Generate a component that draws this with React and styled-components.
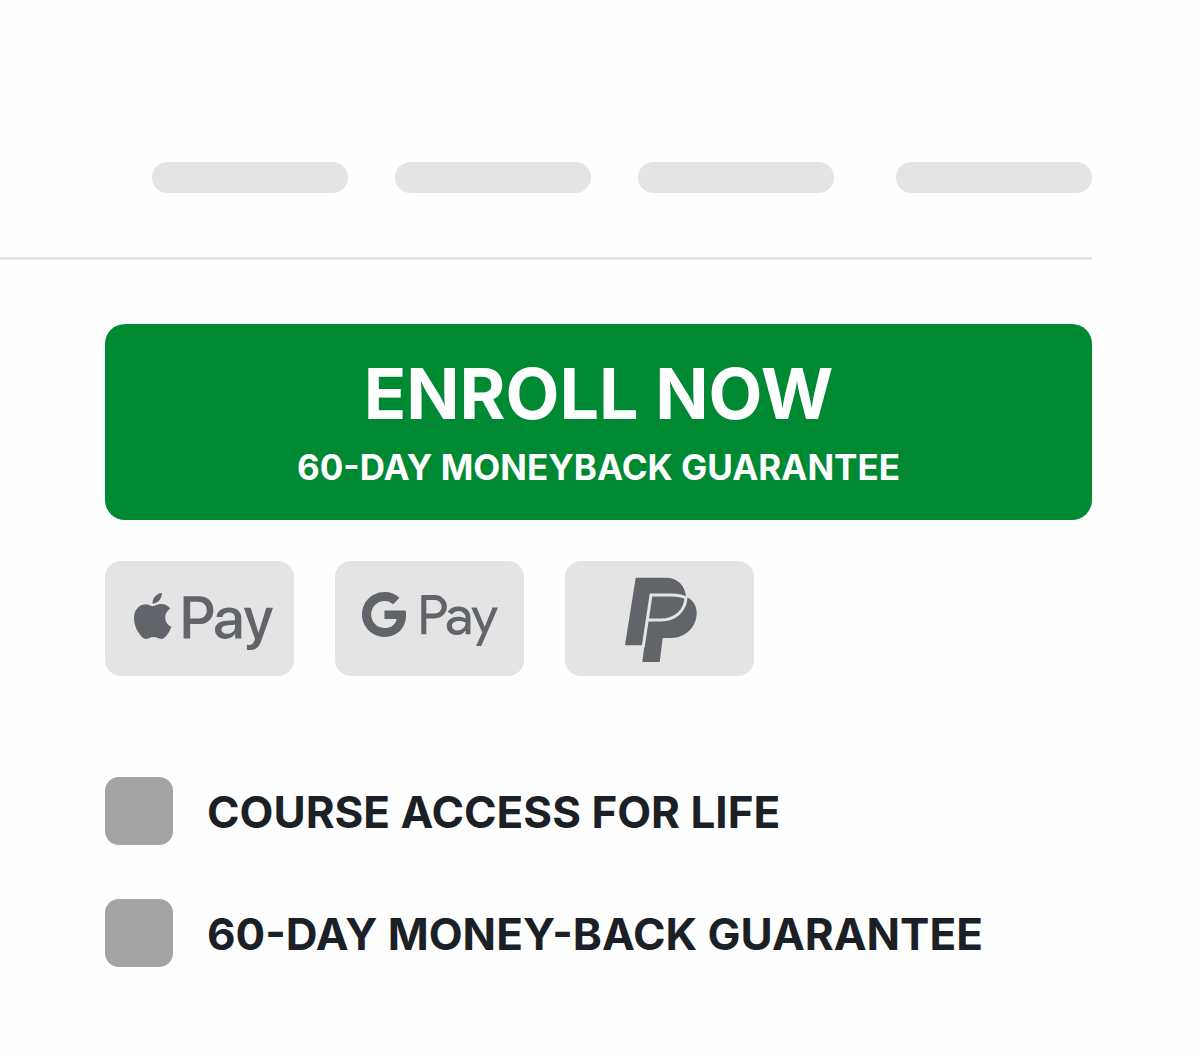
import React from "react";
import styled, { createGlobalStyle } from "styled-components";
import { FaApplePay } from "react-icons/fa";
import { SiGooglepay } from "react-icons/si";

const GlobalStyle = createGlobalStyle`
  *, *::before, *::after { box-sizing: border-box; }
  body {
    margin: 0;
    background: #fefefe;
    color: #1b1f26;
    font-family: Inter, "Liberation Sans", sans-serif;
  }
`;

const Page = styled.div`
  padding: 162px 108px 90px 0;
`;

const Header = styled.header`
  padding: 0 0 64px 152px;
  border-bottom: 3px solid #e4e4e4;
`;

const Nav = styled.nav`
  display: flex;
  justify-content: space-between;
`;

const NavGroup = styled.div`
  display: flex;
  gap: 47px;
`;

const NavPill = styled.span`
  width: 196px;
  height: 31px;
  border-radius: 16px;
  background: #e4e4e4;
`;

const Main = styled.main`
  display: flex;
  flex-direction: column;
  padding: 64px 0 0 105px;
`;

const EnrollButton = styled.button`
  display: flex;
  flex-direction: column;
  align-items: center;
  gap: 11px;
  width: 100%;
  padding: 32px 24px 29px;
  border: 0;
  border-radius: 20px;
  background: #008933;
  color: #fff;
  font-family: inherit;
  font-weight: 700;
  cursor: pointer;
`;

const EnrollTitle = styled.span`
  font-size: 70px;
  line-height: 76px;
`;

const EnrollNote = styled.span`
  font-size: 35px;
  line-height: 48px;
`;

const PaymentList = styled.ul`
  display: flex;
  gap: 41px;
  margin: 41px 0 0;
  padding: 0;
  list-style: none;
`;

const PaymentCard = styled.li`
  display: flex;
  align-items: center;
  justify-content: center;
  width: 189px;
  height: 115px;
  border-radius: 16px;
  background: #e4e4e4;
  color: #616468;
`;

const FeatureList = styled.ul`
  display: flex;
  flex-direction: column;
  gap: 54px;
  margin: 101px 0 0;
  padding: 0;
  list-style: none;
`;

const FeatureLabel = styled.label`
  display: flex;
  align-items: center;
  gap: 34px;
  font-size: 44px;
  line-height: 64px;
  font-weight: 700;
`;

const FeatureText = styled.span`
  padding-top: 2px;
`;

const FeatureBox = styled.input`
  appearance: none;
  flex: none;
  width: 68px;
  height: 68px;
  margin: 0;
  border-radius: 14px;
  background: #a3a3a3;
`;

function PaypalMark() {
  return (
    <svg width="75" height="87" viewBox="-1 -1 75 87" role="img" aria-label="PayPal">
      <path
        fill="currentColor"
        d="M12.7 1.7H43C54 1.7 62 9 63 20.5C70 24 73.7 29.5 73.7 37C73.7 51 62.5 62 48 62H39.7L36.7 86H19.3L21.5 69.3H2Z"
      />
      <path
        fill="none"
        stroke="#e4e4e4"
        strokeWidth="3"
        d="M20.2 71L28 19H48C55 19 59.5 20 63 22C62 35 52 44 38 44H24.5"
      />
    </svg>
  );
}

const features = ["COURSE ACCESS FOR LIFE", "60-DAY MONEY-BACK GUARANTEE"];

export default function App() {
  return (
    <>
      <GlobalStyle />
      <Page>
        <Header>
          <Nav>
            <NavGroup>
              <NavPill />
              <NavPill />
              <NavPill />
            </NavGroup>
            <NavPill />
          </Nav>
        </Header>
        <Main>
          <EnrollButton type="button">
            <EnrollTitle>ENROLL NOW</EnrollTitle>
            <EnrollNote>60-DAY MONEYBACK GUARANTEE</EnrollNote>
          </EnrollButton>
          <PaymentList>
            <PaymentCard>
              <FaApplePay
                size={147}
                viewBox="-37 -28 677 540"
                role="img"
                aria-label="Apple Pay"
              />
            </PaymentCard>
            <PaymentCard>
              <SiGooglepay size={136} role="img" aria-label="Google Pay" />
            </PaymentCard>
            <PaymentCard>
              <PaypalMark />
            </PaymentCard>
          </PaymentList>
          <FeatureList>
            {features.map((text) => (
              <li key={text}>
                <FeatureLabel>
                  <FeatureBox type="checkbox" />
                  <FeatureText>{text}</FeatureText>
                </FeatureLabel>
              </li>
            ))}
          </FeatureList>
        </Main>
      </Page>
    </>
  );
}
